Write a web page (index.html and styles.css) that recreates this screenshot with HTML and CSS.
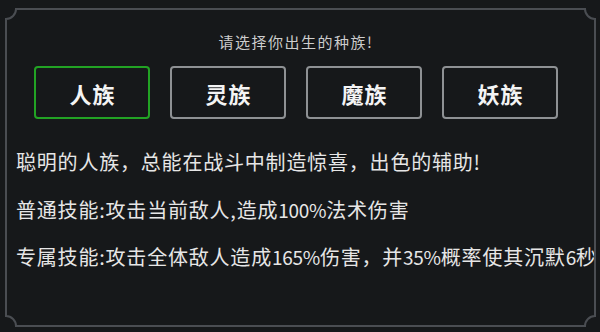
FILE: index.html
```html
<!DOCTYPE html>
<html lang="zh">
<head>
<meta charset="utf-8">
<link rel="stylesheet" href="styles.css">
</head>
<body>
<div class="panel">
  <svg class="frame" width="591" height="319" viewBox="5 8 591 319">
    <path d="M16 9 H585 A10 10 0 0 0 595 19 V316 A10 10 0 0 0 585 326 H16 A10 10 0 0 0 6 316 V19 A10 10 0 0 0 16 9 Z" fill="none" stroke="#4a4d52" stroke-width="2"/>
  </svg>
  <div class="head">
    <div class="title">请选择你出生的种族!</div>
    <div class="races">
      <div class="race active">人族</div>
      <div class="race">灵族</div>
      <div class="race">魔族</div>
      <div class="race">妖族</div>
    </div>
  </div>
  <div class="desc">
    <p class="line">聪明的人族，总能在战斗中制造惊喜，出色的辅助!</p>
    <p class="line">普通技能:攻击当前敌人,造成<span class="num">100%</span>法术伤害</p>
    <p class="line">专属技能:攻击全体敌人造成<span class="num">165%</span>伤害，并<span class="num">35%</span>概率使其沉默<span class="num">6</span>秒</p>
  </div>
</div>
</body>
</html>
```

FILE: styles.css
```css
html, body {
  margin: 0;
  padding: 0;
  background: #16181a;
}
body {
  width: 600px;
  height: 332px;
  overflow: hidden;
  font-family: "Noto Sans CJK SC", "Noto Sans", sans-serif;
}
.panel {
  position: relative;
  margin: 8px 0 0 5px;
  width: 591px;
  height: 319px;
  box-sizing: border-box;
}
.frame {
  position: absolute;
  left: 0;
  top: 0;
}
.head {
  width: 524px;
  margin-left: 29px;
  padding-top: 24px;
  display: flex;
  flex-direction: column;
  align-items: center;
}
.title {
  font-size: 15px;
  line-height: 20px;
  letter-spacing: 1.5px;
  color: #cdcdcd;
  height: 20px;
}
.races {
  margin-top: 14px;
  display: flex;
  gap: 20px;
}
.race {
  width: 116px;
  height: 53px;
  box-sizing: border-box;
  border: 2px solid #8e9194;
  border-radius: 4px;
  display: flex;
  align-items: center;
  justify-content: center;
  font-size: 22px;
  font-weight: 700;
  color: #f4f4f4;
  letter-spacing: 1px;
  padding-left: 1px;
}
.race.active {
  border-color: #22a324;
}
.desc {
  padding-left: 11px;
  padding-top: 19px;
}
.line {
  margin: 0;
  font-size: 20px;
  line-height: 47.5px;
  letter-spacing: 0.8px;
  color: #e6e6e6;
  white-space: nowrap;
}
.num {
  font-size: 19px;
  letter-spacing: -0.3px;
}
```
